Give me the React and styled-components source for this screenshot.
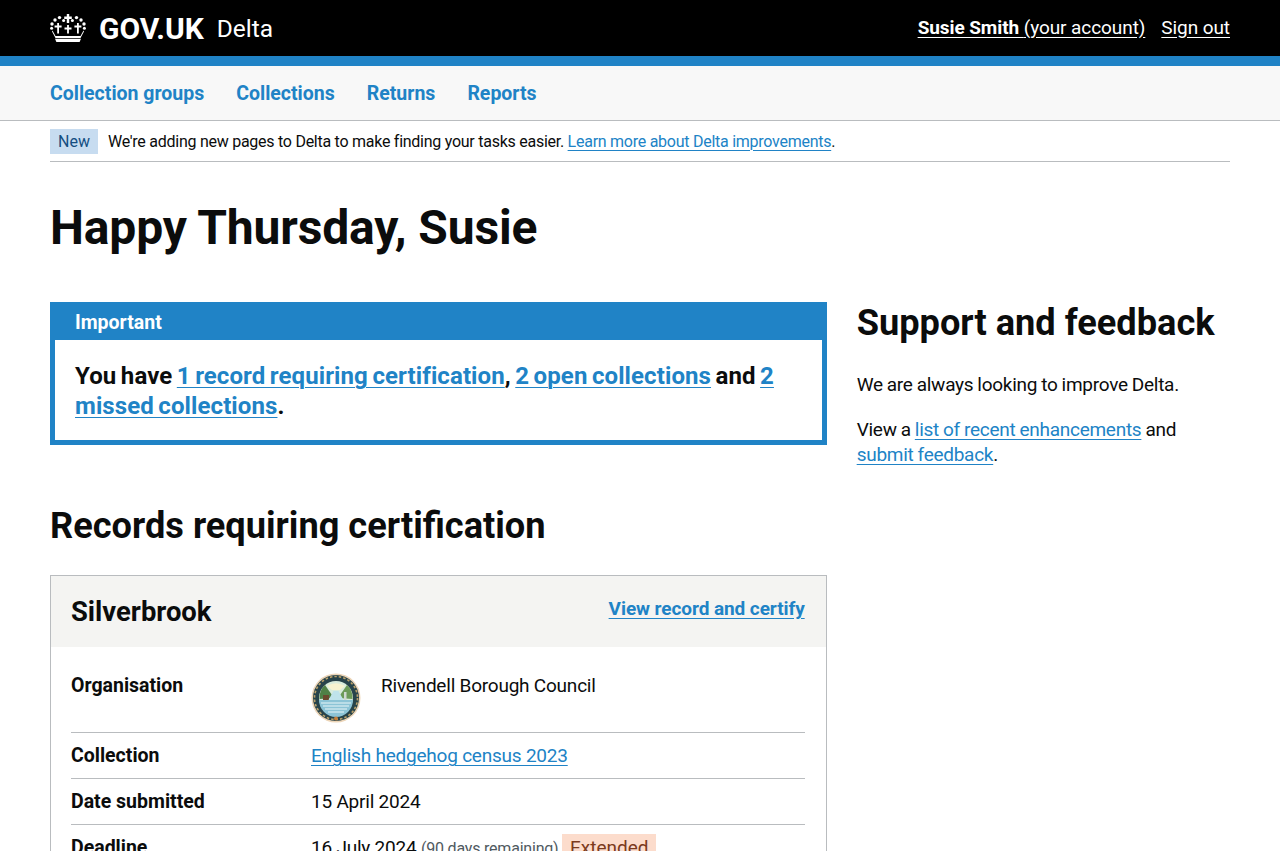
import React from "react";
import styled, { createGlobalStyle } from "styled-components";

const Global = createGlobalStyle`
  html, body { margin: 0; padding: 0; background: #fff; overflow: hidden; height: 851px; }
  body { font-family: Roboto, "Liberation Sans", sans-serif; color: #0b0c0c; }
  #root { height: 851px; overflow: hidden; }
  * { box-sizing: border-box; }
`;

const blue = "#2083c6";

const Header = styled.header`
  height: 66px;
  background: #000;
  border-bottom: 10px solid ${blue};
  padding: 0 50px;
  display: flex;
  align-items: center;
  justify-content: space-between;
`;
const Brand = styled.div`
  display: flex;
  align-items: center;
  color: #fff;
`;
const Wordmark = styled.span`
  font-size: 30px;
  font-weight: 700;
  margin-left: 13px;
`;
const Service = styled.span`
  font-size: 24.5px;
  margin-left: 13px;
  padding-top: 1px;
`;
const Account = styled.div`
  display: flex;
  gap: 16px;
  font-size: 19px;
  letter-spacing: -0.08px;
  color: #fff;
  padding-bottom: 2px;
`;
const HeaderLink = styled.a`
  color: #fff;
  text-decoration: underline;
  text-underline-offset: 3px;
  b { font-weight: 700; }
`;
const Nav = styled.nav`
  height: 55px;
  background: #f8f8f8;
  border-bottom: 1px solid #b9bcbf;
  padding: 0 50px;
  display: flex;
  align-items: center;
  gap: 32px;
`;
const NavLink = styled.a`
  color: ${blue};
  font-size: 19.5px;
  font-weight: 700;
`;
const Container = styled.div`
  padding: 0 50px;
`;
const Phase = styled.div`
  height: 41px;
  border-bottom: 1px solid #b9bcbf;
  display: flex;
  align-items: center;
  gap: 10px;
  font-size: 16px;
  letter-spacing: -0.26px;
`;
const Tag = styled.span`
  background: #c7dcf0;
  color: #144e81;
  font-size: 16px;
  letter-spacing: 0;
  height: 25px;
  width: 48px;
  display: flex;
  align-items: center;
  justify-content: center;
`;
const Link = styled.a`
  color: ${blue};
  text-decoration: underline;
  text-decoration-thickness: 1px;
  text-underline-offset: 3px;
`;
const H1 = styled.h1`
  font-size: 48px;
  line-height: 50px;
  font-weight: 700;
  letter-spacing: -0.15px;
  margin: 41px 0 49px;
`;
const Columns = styled.div`
  display: grid;
  grid-template-columns: 776.67px 373.33px;
  gap: 30px;
`;
const Banner = styled.div`
  border: 5px solid ${blue};
  background: ${blue};
  margin-bottom: 60px;
`;
const BannerTitle = styled.div`
  color: #fff;
  font-size: 19.5px;
  font-weight: 700;
  height: 29px;
  margin-bottom: 4px;
  padding: 1px 20px 0;
  display: flex;
  align-items: center;
`;
const BannerBody = styled.div`
  background: #fff;
  padding: 21px 20px 19px;
  font-size: 24px;
  line-height: 30px;
  font-weight: 700;
  word-spacing: -1.6px;
  letter-spacing: 0.1px;
  height: 100px;
`;
const H2 = styled.h2`
  font-size: 36.2px;
  line-height: 40px;
  font-weight: 700;
  padding-top: 1px;
  margin: 0 0 29px;
`;
const Card = styled.section`
  border: 1px solid #b9bcbf;
`;
const CardHead = styled.div`
  height: 71px;
  background: #f4f4f2;
  padding: 0 21px 0 20px;
  display: flex;
  justify-content: space-between;
`;
const CardTitle = styled.h3`
  font-size: 27.4px;
  font-weight: 700;
  margin: 0;
  padding-top: 1px;
  line-height: 70px;
`;
const CardAction = styled.a`
  color: ${blue};
  font-size: 19px;
  font-weight: 700;
  letter-spacing: -0.08px;
  text-decoration: underline;
  text-underline-offset: 3px;
  margin-top: 21px;
`;
const CardBody = styled.div`
  padding: 15px 21px 0 20px;
`;
const Row = styled.div`
  display: grid;
  grid-template-columns: 240px 1fr;
  font-size: 19px;
  letter-spacing: -0.22px;
  line-height: 25px;
  padding: ${p => (p.$tall ? "11px 0 9px" : "10px 0")};
  border-bottom: 1px solid #b9bcbf;
`;
const Key = styled.div`
  font-weight: 700;
  font-size: 19.5px;
  letter-spacing: 0;
`;
const OrgValue = styled.div`
  display: flex;
  gap: 20px;
`;
const Muted = styled.span`
  color: #505a5f;
  font-size: 16px;
  letter-spacing: -0.2px;
`;
const Extended = styled.span`
  background: #fcdccc;
  color: #7b3a1c;
  padding: 1px 8px;
  display: inline-block;
  letter-spacing: 0;
  margin: -1px 0 0 -1px;
`;
const P = styled.p`
  font-size: 19px;
  letter-spacing: -0.27px;
  word-spacing: -0.4px;
  line-height: 25px;
  margin: 0 0 20px;
`;

const Crown = () => (
  <svg width="36" height="28" viewBox="0 0 36 28" fill="#fff" aria-hidden="true">
    <path d="M16.8 0h2.4v2.6h2.6v2.4h-2.6v4h-2.4V5h-2.6V2.6h2.6z" />
    <circle cx="2" cy="10" r="1.7" />
    <circle cx="5" cy="6" r="1.7" />
    <circle cx="9.5" cy="3.6" r="1.7" />
    <circle cx="13.6" cy="6.4" r="1.5" />
    <circle cx="22.4" cy="6.4" r="1.5" />
    <circle cx="26.5" cy="3.6" r="1.7" />
    <circle cx="31" cy="6" r="1.7" />
    <circle cx="34" cy="10" r="1.7" />
    <circle cx="1.6" cy="14.2" r="1.5" />
    <circle cx="34.4" cy="14.2" r="1.5" />
    <path d="M7.2 9h1.8v2.6h2.6v1.8H9v6H7.2v-6H4.6v-1.8h2.6zM17.1 11h1.8v2.6h2.6v1.8h-2.6v4h-1.8v-4h-2.6v-1.8h2.6zM27 9h1.8v2.6h2.6v1.8h-2.6v6H27v-6h-2.6v-1.8H27z" />
    <path d="M2.5 16.5l3 5.5h25l3-5.5.5 1-3.5 6.5H5.5L2 17.5z" />
    <path d="M5 24.8h26l-1.4 3.2H6.4z" />
  </svg>
);

const Seal = () => (
  <svg width="50" height="50" viewBox="0 0 50 50" aria-label="Rivendell Borough Council seal" role="img">
    <circle cx="25" cy="25" r="24.5" fill="#ecd5b8" />
    <circle cx="25" cy="25" r="23" fill="#27434a" />
    <circle cx="25" cy="25" r="21.5" fill="none" stroke="#b9a06a" strokeWidth="1.6" strokeDasharray="2.5 2" />
    <circle cx="25" cy="25" r="17" fill="#d9ecdc" />
    <path d="M16 13a17 17 0 0 1 18 0l-5 4h-8z" fill="#f6f3d0" />
    <path d="M8.5 26a17 17 0 0 1 5.5-14l9 13z" fill="#4f8146" />
    <path d="M41.5 26a17 17 0 0 0-5.5-14l-9 13z" fill="#6c9a58" />
    <rect x="12" y="22" width="6" height="5" fill="#6b4a2e" />
    <rect x="33" y="19" width="2.5" height="8" fill="#cfd8d0" />
    <path d="M8 27h34a17 17 0 0 1-34 0z" fill="#8cc4d6" />
    <path d="M22.5 18h5l5 9H17.5z" fill="#bfe3ea" />
    <path d="M10 30h30M12 33h26M14 36h22M17 39h16" stroke="#e8f6f8" strokeWidth="1.2" />
    <circle cx="25" cy="45.5" r="2" fill="#c4803c" />
  </svg>
);

export default function App() {
  return (
    <>
      <Global />
      <Header>
        <Brand>
          <Crown />
          <Wordmark>GOV.UK</Wordmark>
          <Service>Delta</Service>
        </Brand>
        <Account>
          <HeaderLink><b>Susie Smith </b>(your account)</HeaderLink>
          <HeaderLink>Sign out</HeaderLink>
        </Account>
      </Header>
      <Nav>
        <NavLink>Collection groups</NavLink>
        <NavLink>Collections</NavLink>
        <NavLink>Returns</NavLink>
        <NavLink>Reports</NavLink>
      </Nav>
      <Container>
        <Phase>
          <Tag>New</Tag>
          <span>We're adding new pages to Delta to make finding your tasks easier. <Link>Learn more about Delta improvements</Link>.</span>
        </Phase>
        <H1>Happy Thursday, Susie</H1>
        <Columns>
          <div>
            <Banner>
              <BannerTitle>Important</BannerTitle>
              <BannerBody>
                You have <Link>1 record requiring certification</Link>, <Link>2 open collections</Link> and <Link>2 missed collections</Link>.
              </BannerBody>
            </Banner>
            <H2>Records requiring certification</H2>
            <Card>
              <CardHead>
                <CardTitle>Silverbrook</CardTitle>
                <CardAction>View record and certify</CardAction>
              </CardHead>
              <CardBody>
                <Row $tall>
                  <Key>Organisation</Key>
                  <OrgValue><Seal />Rivendell Borough Council</OrgValue>
                </Row>
                <Row>
                  <Key>Collection</Key>
                  <div><Link>English hedgehog census 2023</Link></div>
                </Row>
                <Row>
                  <Key>Date submitted</Key>
                  <div>15 April 2024</div>
                </Row>
                <Row>
                  <Key>Deadline</Key>
                  <div>16 July 2024 <Muted>(90 days remaining)</Muted> <Extended>Extended</Extended></div>
                </Row>
              </CardBody>
            </Card>
          </div>
          <aside>
            <H2>Support and feedback</H2>
            <P>We are always looking to improve Delta.</P>
            <P>View a <Link>list of recent enhancements</Link> and <Link>submit feedback</Link>.</P>
          </aside>
        </Columns>
      </Container>
    </>
  );
}
